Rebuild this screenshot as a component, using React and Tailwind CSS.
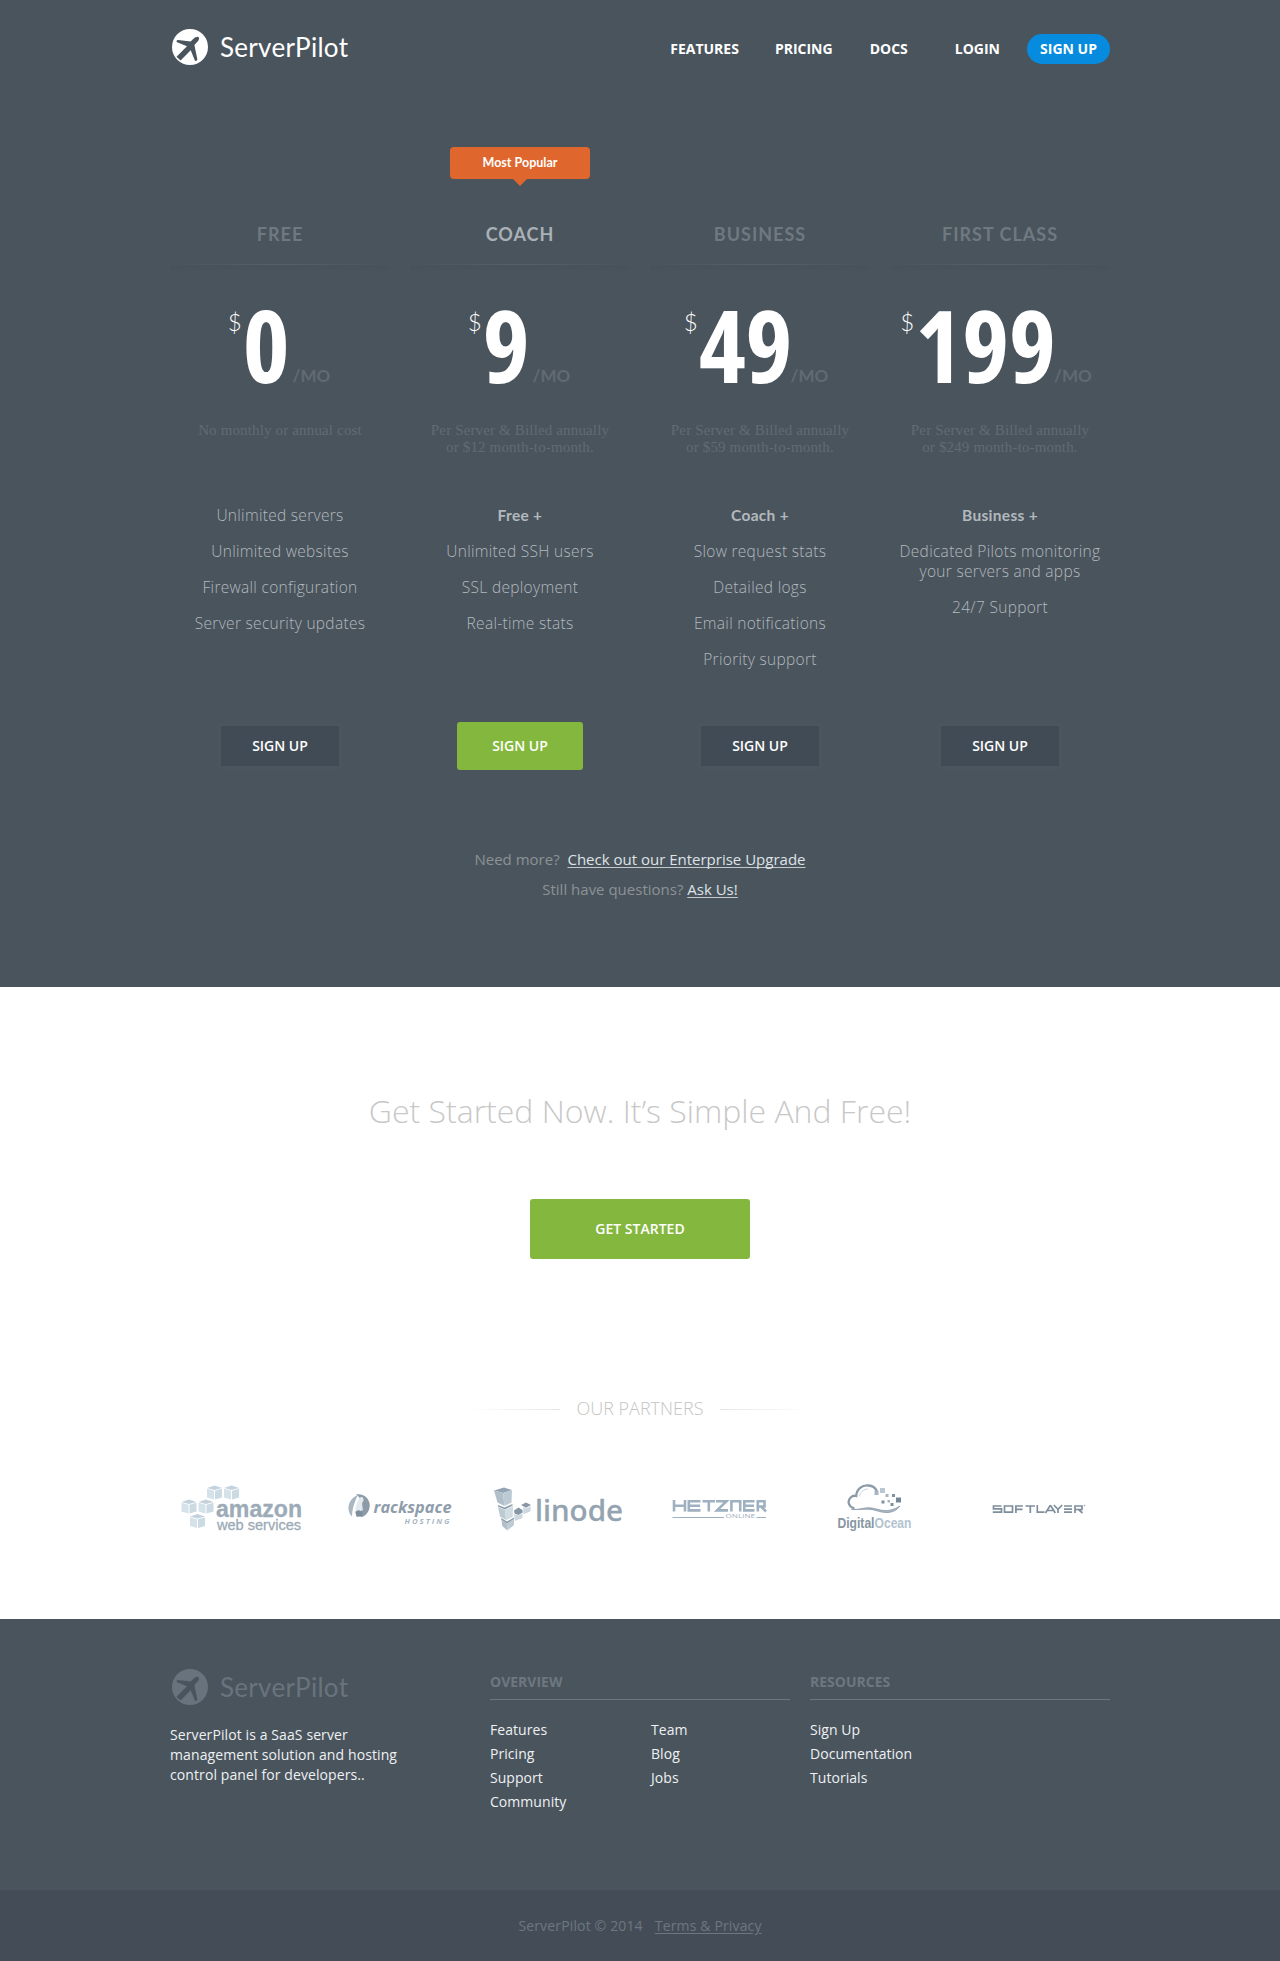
const lato = "font-[Lato,'Open_Sans',sans-serif]";

function Logo({ className, hole }) {
  return (
    <div className={`flex h-9 items-center ${className}`}>
      <svg width="36" height="36" viewBox="0 0 36 36">
        <circle cx="18" cy="18" r="18" fill="currentColor" />
        <path
          d="M26.6 8.2c1 1 .2 3.2-1.2 4.600l-3 3.200c.9 4.400 2 9.700 2.900 13.900.3 1.300-1.500 2.900-2.400 1.500L18.700 21.200l-10.100 10.400L4.500 27.700 15 17.300 5.200 13.200c-1.400-.6-.5-2.400.9-2.200l12.500 1.600 2.900-2.800c1.500-1.500 4.100-2.600 5.100-1.600z"
          fill={hole}
        />
      </svg>
      <svg width="130" height="36" viewBox="0 0 130 36" className="ml-3 overflow-visible">
        <text x="0" y="27.500" fontSize="26" textLength="128" className="font-[Lato,sans-serif]" fill="currentColor">ServerPilot</text>
      </svg>
    </div>
  );
}

const plans = [
  {
    name: "FREE", price: "0", note: ["No monthly or annual cost"],
    items: ["Unlimited servers", "Unlimited websites", "Firewall configuration", "Server security updates"],
  },
  {
    name: "COACH", price: "9", popular: true, plus: "Free +",
    note: ["Per Server & Billed annually", "or $12 month-to-month."],
    items: ["Unlimited SSH users", "SSL deployment", "Real-time stats"],
  },
  {
    name: "BUSINESS", price: "49", plus: "Coach +",
    note: ["Per Server & Billed annually", "or $59 month-to-month."],
    items: ["Slow request stats", "Detailed logs", "Email notifications", "Priority support"],
  },
  {
    name: "FIRST CLASS", price: "199", plus: "Business +",
    note: ["Per Server & Billed annually", "or $249 month-to-month."],
    items: ["Dedicated Pilots monitoring your servers and apps", "24/7 Support"],
  },
];

function Plan({ plan }) {
  return (
    <div className="flex w-[220px] flex-col items-center text-center">
      <div className="h-[72px]">
        {plan.popular && (
          <div className="flex flex-col items-center">
            <div className={`flex h-8 w-[140px] items-center justify-center rounded bg-[#df662c] text-[12.500px] font-bold text-white ${lato}`}>
              Most Popular
            </div>
            <div className="h-0 w-0 border-x-[7px] border-t-[7px] border-x-transparent border-t-[#df662c]" />
          </div>
        )}
      </div>
      <h2 className={`h-[30px] text-[18px] leading-[30px] font-bold tracking-[1px] ${lato} ${plan.popular ? "text-[#a9b1b6]" : "text-[#6f7981]"}`}>
        {plan.name}
      </h2>
      <div className="mt-[15px] h-px w-full bg-linear-to-r from-transparent via-[#56616a] to-transparent" />
      <div className="h-[7px] w-full bg-linear-to-b from-[#46505a] to-transparent opacity-60" />
      <div className="mt-[25px] flex h-[98px] items-start justify-center text-white">
        <span className={`mt-[10px] text-[24px] leading-[30px] font-light ${lato}`}>$</span>
        <span className="ml-px text-[100px] leading-[95px] font-bold [font-stretch:75%]">{plan.price}</span>
        <span className={`mt-[64px] text-[17px] leading-[30px] font-bold text-[#616a72] ${lato} ${plan.price.length > 1 ? "mr-2 -ml-0.5" : "mr-0.5 ml-[3px]"}`}>
          /MO
        </span>
      </div>
      <div className="mt-[27px] h-[83px] font-['Liberation_Serif',serif] text-[15px] leading-[17px] tracking-[0.150px] text-[#616b73]">
        {plan.note.map((line) => <p key={line}>{line}</p>)}
      </div>
      <ul className="flex h-[217px] flex-col gap-4 text-[15.500px] leading-5 font-light tracking-[0.300px] text-[#b2b9bd]">
        {plan.plus && <li className={`font-bold ${lato}`}>{plan.plus}</li>}
        {plan.items.map((item) => <li key={item} className="w-[220px] px-1">{item}</li>)}
      </ul>
      {plan.popular ? (
        <button className="h-12 w-[126px] rounded-[3px] bg-[#84b73e] pb-0.5 text-[14px] font-semibold text-white">SIGN UP</button>
      ) : (
        <button className="h-12 w-[126px] rounded border-4 border-[#4b555e] bg-[#414b55] pb-0.5 text-[14px] font-semibold text-white">SIGN UP</button>
      )}
    </div>
  );
}

function Cube({ x, y }) {
  return (
    <g transform={`translate(${x} ${y})`}>
      <path d="M0 2.500 7.500 0 15 2.500 7.500 4.500z" fill="#c3d2dc" />
      <path d="M0 3.300 7 5.200V14L0 12z" fill="#d5e2ea" />
      <path d="M15 3.300 8 5.200V14l7-2z" fill="#cbdae3" />
    </g>
  );
}

function Amazon() {
  return (
    <svg width="122" height="50" viewBox="180 1484 122 50">
      <Cube x={207} y={1485.500} /><Cube x={224} y={1485.500} />
      <Cube x={181.500} y={1499.500} /><Cube x={198.500} y={1499.500} />
      <Cube x={190} y={1514} />
      <text x="216" y="1516.500" fontSize="23" fontWeight="700" textLength="86" lengthAdjust="spacingAndGlyphs" fill="#9cabb7" stroke="#9cabb7" strokeWidth=".3" className="font-['Liberation_Sans',sans-serif]">amazon</text>
      <text x="217" y="1530" fontSize="14" textLength="84" lengthAdjust="spacingAndGlyphs" fill="#9cabb7" stroke="#9cabb7" strokeWidth=".3" className="font-['Liberation_Sans',sans-serif]">web services</text>
    </svg>
  );
}

function Rackspace() {
  return (
    <svg width="106" height="34" viewBox="347 1492 106 34">
      <path d="M356 1494.500c6-1 12 2 13.500 8.500 1.300 6-2.500 12.500-7.500 14l-4-1.500 3-4.500 1-9-3-5z" fill="#8d9ba8" />
      <path d="M358 1495c-6 2-10 8-9.500 14 .2 3 1.500 6 3.500 7.500 0-6 2-14 6-21.500z" fill="#aab7c2" />
      <path d="M359.500 1498c2.500-2 4.500-.5 4 2.500l-1.500 3 1 7c-3-1.500-6 0-7 3l-1 2.500c-.5-6 1-12 4.500-18z" fill="#e2e9ee" />
      <path d="M355.500 1512c2-2.500 5.500-2.500 7 1l-1 3.500-5 .3z" fill="#7f8e9c" />
      <text x="373.500" y="1513" fontSize="16.500" fontWeight="700" fontStyle="italic" textLength="78" lengthAdjust="spacingAndGlyphs" fill="#8f9dab" className="font-['Open_Sans',sans-serif]">rackspace</text>
      <text x="404.500" y="1523.500" fontSize="7.800" fontWeight="700" fontStyle="italic" textLength="45" fill="#aab7c3" className="font-['Open_Sans',sans-serif]">HOSTING</text>
    </svg>
  );
}

function Linode() {
  return (
    <svg width="132" height="46" viewBox="493 1486 132 46">
      <path d="M494 1490.500l10-3 8 2.500-9 3z" fill="#93a4b2" />
      <path d="M494 1490.500l9 2.500 1.500 13-7-3.500z" fill="#b0bfca" />
      <path d="M503 1493l9-3-.5 12.500-7 3.500z" fill="#bccad4" />
      <path d="M498 1505l6.500 2.500 8-3.500v1.500l-7.500 4-7-3z" fill="#8b9cab" />
      <path d="M498 1507l7 3 1 10-6-3.500z" fill="#bccad3" />
      <path d="M505 1510l8-4-.3 11-6.700 3z" fill="#d0dbe2" />
      <path d="M501 1518l6 3.500 7-4 .2 1.500-7.200 4.500-5.500-3.500z" fill="#8b9cab" />
      <path d="M501.500 1520l5.500 3.500.3 7-5-4.500z" fill="#b0bfca" />
      <path d="M507 1523.500l7-4.500v6l-6.700 5.500z" fill="#becbd5" />
      <path d="M514 1510.500l4.500-3 4 2.500.2 2.500-4.200 2.500-4-1.500z" fill="#8797a5" />
      <path d="M514 1514l4.500 1.500 4-2v4.500l-7.500 3z" fill="#ccd7df" />
      <path d="M521 1505l5-2.500 5 2.500-5 2.800z" fill="#8797a5" />
      <path d="M523 1507l3 1.600 4.800-2.400-.3 5-7 3z" fill="#ccd7df" />
      <text x="535" y="1521" fontSize="28.500" fontWeight="500" textLength="88" lengthAdjust="spacingAndGlyphs" fill="#93a3b0" stroke="#93a3b0" strokeWidth=".3" className="font-['Noto_Sans',sans-serif]">linode</text>
    </svg>
  );
}

function Hetzner() {
  return (
    <svg width="95" height="22" viewBox="672 1498 95 22" fill="none" stroke="#9fb0c0" strokeWidth="2.600" className="overflow-visible">
      <path d="M674 1500v11.500M685 1500v11.500M674 1505.800h11M700.500 1501.200h-11.700v9.200h11.700M689 1505.800h11M702.500 1501.200h12.500M708.800 1501.200v10.300M716 1501.200h10.500l-9.500 9.200h11M731.400 1511.500v-10.300h8.800v10.300M754.500 1501.200h-10.200v9.200h10.200M744.500 1505.800h9.500M757.800 1511.500v-10.300h6.700v5.300h-6.700M761 1506.500l5 5" />
      <path d="M672.500 1517.500h51.500M756.500 1517.500h9.500" strokeWidth="1" />
      <text x="725.500" y="1518.200" fontSize="6" textLength="29.500" lengthAdjust="spacingAndGlyphs" fill="#9fb0c0" stroke="none" className="font-['Open_Sans',sans-serif]">ONLINE</text>
    </svg>
  );
}

function DigitalOcean() {
  return (
    <svg width="76" height="50" viewBox="837 1484 76 50">
      <g fill="none" stroke="#8c9ba8" strokeLinecap="round">
        <path d="M853.500 1508c-5-1.500-6.500-7-2.800-10.500 1.800-1.700 3.800-2 5.500-1.500.3-7 6-11.300 12.500-10.500 3.600.4 6.500 2.200 7.800 5" strokeWidth="2.300" />
        <path d="M852 1509.500c7 1 13-3 20-1.500 8 1.500 15 6 28-2-6 8-15 7.500-24 4.500-8-2.500-16-.5-24-1z" strokeWidth=".8" fill="#a8b7c2" />
        <path d="M859.500 1496c.5-3 3.500-6.500 8-7" stroke="#bac7d0" strokeWidth=".8" />
      </g>
      <g fill="#a6b5c1">
        <path d="M874.500 1491h4v4h-4z" /><path d="M880 1488h5v5h-5z" fill="#bac7d1" />
        <path d="M885.500 1494h3v3h-3z" /><path d="M892 1494h3v3h-3z" fill="#82909c" />
        <path d="M896 1497.500h5v5h-5z" fill="#768896" /><path d="M881.500 1500.500h3v3h-3z" fill="#82909c" />
        <path d="M887.500 1500h2.500v2.500h-2.500z" /><path d="M890.500 1503h3v3h-3z" fill="#82909c" />
      </g>
      <text x="837.500" y="1528" fontSize="14" fontWeight="700" textLength="74" lengthAdjust="spacingAndGlyphs" fill="#8796a3" className="font-['Liberation_Sans',sans-serif]">
        Digital<tspan fill="#b4c3d0">Ocean</tspan>
      </text>
    </svg>
  );
}

function SoftLayer() {
  return (
    <svg width="95" height="12" viewBox="991 1503 95 12" fill="none" stroke="#7f8e9c" strokeWidth="1.700">
      <path d="M1001.500 1506h-8v2.900h8v3.200h-8.700M1004.500 1506h8v6.200h-8zM1015.900 1513v-7h7M1016 1509.300h6.500M1025.500 1506h9.500M1030.300 1506v7M1037.300 1505v7.200h7.200M1045.500 1513l4.500-7.200h.8l4.500 7.200M1047.500 1510.500h6M1053.800 1505l4.200 4.300 4.200-4.300M1058 1509v4M1064 1506h8M1064 1509.200h8M1064 1512.200h8M1075 1513v-7h7v3.500h-6.500M1078.500 1509.500l4 3.500" />
      <circle cx="1084.500" cy="1505.500" r=".6" strokeWidth=".5" />
    </svg>
  );
}

function LinkList({ items, className }) {
  return (
    <ul className={`text-[14px] leading-6 tracking-[0.050px] text-[#eef1f3] ${className}`}>
      {items.map((item) => <li key={item}>{item}</li>)}
    </ul>
  );
}

export default function App() {
  return (
    <div className="h-[1961px] w-[1280px] bg-[#4a545d] font-['Open_Sans',sans-serif]">
      <section className="mx-auto h-[987px] w-[940px]">
        <header className="flex h-[147px] items-start justify-between">
          <Logo className="mt-[29px] ml-0.5 text-white" hole="#4a545d" />
          <nav className="mt-[34px] flex items-center text-[14px] leading-[30px] font-bold text-white">
            <a>FEATURES</a>
            <a className="ml-9">PRICING</a>
            <a className="ml-[37px]">DOCS</a>
            <a className="ml-[47px]">LOGIN</a>
            <a className="ml-[27px] flex h-[30px] w-[83px] items-center justify-center rounded-full bg-[#078bdf]">SIGN UP</a>
          </nav>
        </header>
        <div className="flex justify-between">
          {plans.map((plan) => <Plan key={plan.name} plan={plan} />)}
        </div>
        <div className="mt-[74px] text-center text-[15px] leading-[30px] text-[#8c9295]">
          <p>Need more?&nbsp; <a className="text-[#dfe3e6] underline decoration-[#c3c8cc] decoration-1 underline-offset-2 [text-decoration-skip-ink:none]">Check out our Enterprise Upgrade</a></p>
          <p>Still have questions? <a className="text-[#dfe3e6] underline decoration-[#c3c8cc] decoration-1 underline-offset-2 [text-decoration-skip-ink:none]">Ask Us!</a></p>
        </div>
      </section>

      <section className="flex h-[632px] flex-col items-center bg-white">
        <h1 className="mt-[101px] text-[32px] leading-[46px] font-light text-[#c8c8c8]">Get Started Now. It’s Simple And Free!</h1>
        <button className="mt-[65px] h-[60px] w-[220px] rounded-[3px] bg-[#84b73e] pb-0.5 text-[14px] font-semibold text-white">GET STARTED</button>
        <div className="mt-[136px] flex h-[26px] items-center text-[18px] font-light text-[#c4c4c4]">
          <span className="mt-0.5 mr-[17px] h-px w-[92px] bg-linear-to-r from-transparent to-[#e6e6e6]" />
          OUR PARTNERS
          <span className="mt-0.5 ml-[17px] h-px w-[92px] bg-linear-to-l from-transparent to-[#e6e6e6]" />
        </div>
        <div className="mt-[63px] flex h-[50px] w-[940px] items-center pl-[10px]">
          <Amazon />
          <div className="ml-[45px]"><Rackspace /></div>
          <div className="ml-[40px]"><Linode /></div>
          <div className="ml-[47px]"><Hetzner /></div>
          <div className="ml-[70px]"><DigitalOcean /></div>
          <div className="ml-[78px]"><SoftLayer /></div>
        </div>
      </section>

      <footer>
        <div className="mx-auto flex h-[271px] w-[940px] pt-[50px]">
          <div className="w-80">
            <Logo className="ml-0.5 text-[#69737d]" hole="#4a545d" />
            <p className="mt-5 w-[240px] text-[14px] leading-5 tracking-[0.100px] text-[#eef1f3]">
              ServerPilot is a SaaS server management solution and hosting control panel for developers..
            </p>
          </div>
          <div className="w-[300px]">
            <h3 className="h-[31px] border-b border-[#6d7780] text-[14px] leading-[26px] font-bold text-[#6d7780]">OVERVIEW</h3>
            <div className="mt-[18px] flex">
              <LinkList items={["Features", "Pricing", "Support", "Community"]} className="w-[161px]" />
              <LinkList items={["Team", "Blog", "Jobs"]} className="" />
            </div>
          </div>
          <div className="ml-5 w-[300px]">
            <h3 className="h-[31px] border-b border-[#6d7780] text-[14px] leading-[26px] font-bold text-[#6d7780]">RESOURCES</h3>
            <LinkList items={["Sign Up", "Documentation", "Tutorials"]} className="mt-[18px]" />
          </div>
        </div>
        <div className="flex h-[71px] items-center justify-center gap-3 bg-[#444d57] pb-px text-[14px] tracking-[0.150px] text-[#6d7780]">
          <span>ServerPilot © 2014</span>
          <a className="underline underline-offset-2">Terms &amp; Privacy</a>
        </div>
      </footer>
    </div>
  );
}
